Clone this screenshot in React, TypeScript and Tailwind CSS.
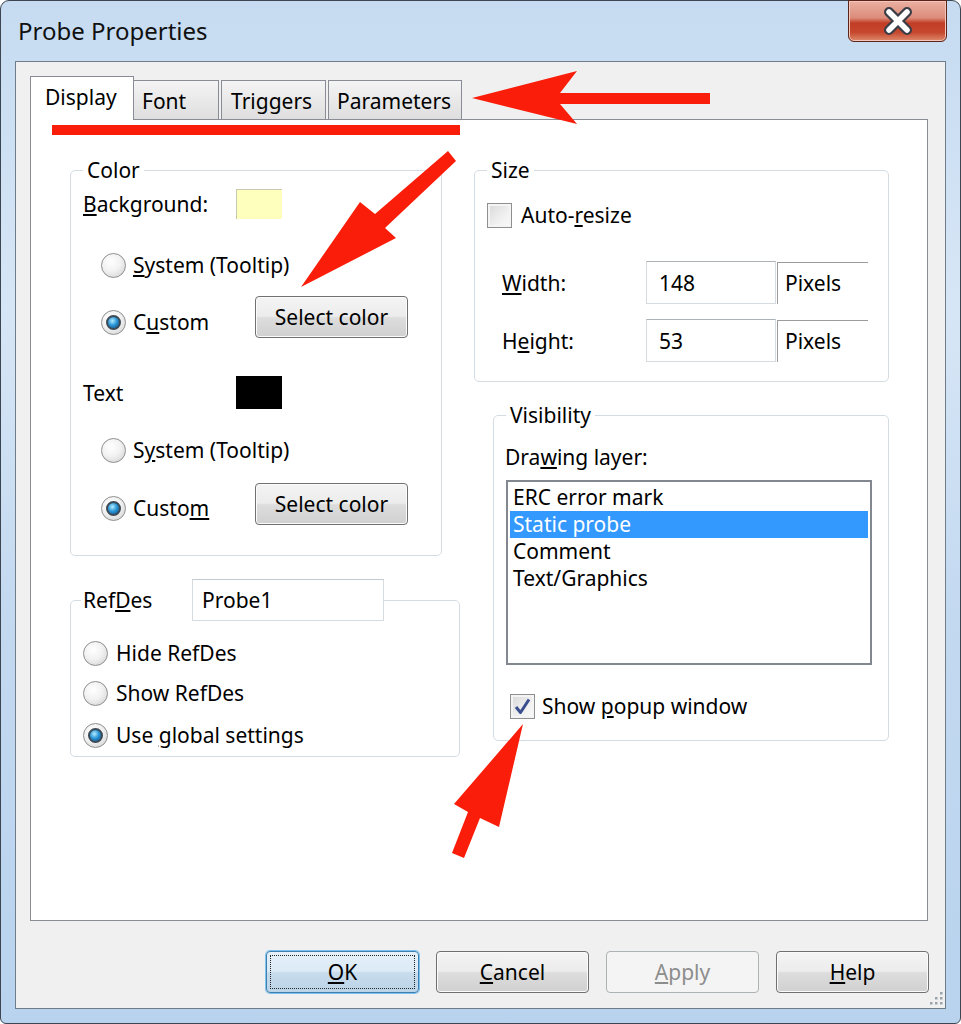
import React from 'react';

function Radio({ checked }: { checked?: boolean }) {
  return (
    <span className="w-[25px] h-[25px] rounded-full border border-[#8e8f8f] bg-[radial-gradient(circle_at_40%_35%,#ffffff_0%,#f2f2f2_45%,#cdcdcd_100%)] flex items-center justify-center shrink-0">
      {checked && (
        <span className="w-[15px] h-[15px] rounded-full border-2 border-[#3d4a55] bg-[radial-gradient(circle_at_40%_35%,#b5ecff_0%,#2d98d8_45%,#0b4a80_100%)]" />
      )}
    </span>
  );
}

function Check({ checked }: { checked?: boolean }) {
  return (
    <span className="w-[25px] h-[25px] border border-[#8e8f8f] bg-[linear-gradient(135deg,#d8d8d8_0%,#f0f0f0_60%,#fbfbfb_100%)] shadow-[inset_0_0_0_2px_#f4f4f4] flex items-center justify-center shrink-0">
      {checked && (
        <svg width="19" height="19" viewBox="0 0 19 19">
          <path d="M3 10 L7.5 15.5 L16 2.5" fill="none" stroke="#3b4f8f" strokeWidth="3" strokeLinejoin="round" />
        </svg>
      )}
    </span>
  );
}

function Btn({ children }: { children: React.ReactNode }) {
  return (
    <div className="w-[153px] h-[42px] rounded-[4px] border border-[#707070] bg-[linear-gradient(to_bottom,#f4f4f4_0%,#ececec_48%,#dddddd_52%,#d0d0d0_100%)] shadow-[inset_0_0_0_1px_#fbfbfb] flex items-center justify-center">
      {children}
    </div>
  );
}

function TextBox({ children }: { children: React.ReactNode }) {
  return (
    <div className="w-[130px] h-[43px] border border-[#d6dbe0] border-t-[#adb2b8] bg-white flex items-center pl-[12px]">
      {children}
    </div>
  );
}

const legend = 'ml-[12px] px-[4px] leading-[28px]';
const group = 'border border-[#d3dce3] rounded-[5px]';

export default function App() {
  return (
    <div className="relative w-[961px] h-[1024px] overflow-hidden bg-white font-['Noto_Sans',sans-serif] text-[21px] leading-[28px] text-black">
      <div className="h-full flex flex-col rounded-t-[9px] rounded-b-[6px] border border-[#3b4652] bg-[linear-gradient(to_bottom,#c6dbf1_0%,#d7e6f6_30%,#c3d9f0_60%,#b9d3ee_100%)]">
        {/* title bar */}
        <div className="h-[60px] flex items-start justify-between pl-[17px]">
          <div className="mt-[14px] text-[24px] leading-[32px] text-[#111]">Probe Properties</div>
          <div className="-mt-px mr-[13px] w-[99px] h-[42px] rounded-b-[6px] border border-[#5c2418] bg-[linear-gradient(to_bottom,#eab0a2_0%,#dc8c7a_42%,#c23d25_55%,#c5472d_78%,#de8a6c_100%)] shadow-[inset_0_0_0_1px_#f3c7bb] flex items-center justify-center">
            <svg width="36" height="28" viewBox="0 0 36 28">
              <path d="M9 5 L27 23 M27 5 L9 23" stroke="#3a3d46" strokeWidth="10" strokeLinecap="round" />
              <path d="M9 5 L27 23 M27 5 L9 23" stroke="#ffffff" strokeWidth="5.5" strokeLinecap="round" />
            </svg>
          </div>
        </div>

        {/* client area */}
        <div className="relative flex-1 mx-[14px] mb-[14px] border border-[#6f7c89] bg-[#f0f0f0] flex flex-col pt-[14px] pl-[14px] pr-[17px]">
          {/* tabs */}
          <div className="flex items-end h-[43px]">
            <div className="relative z-10 -mb-px w-[104px] h-[44px] border border-b-0 border-[#898c95] bg-white pl-[14px] pt-[6px]">Display</div>
            <div className="w-[85px] h-[39px] border border-l-0 border-b-0 border-[#898c95] bg-[linear-gradient(to_bottom,#f4f4f4,#dedede)] pl-[8px] pt-[6px]">Font</div>
            <div className="ml-[2px] w-[105px] h-[39px] border border-b-0 border-[#898c95] bg-[linear-gradient(to_bottom,#f4f4f4,#dedede)] pl-[9px] pt-[6px]">Triggers</div>
            <div className="ml-[2px] w-[134px] h-[39px] border border-b-0 border-[#898c95] bg-[linear-gradient(to_bottom,#f4f4f4,#dedede)] pl-[8px] pt-[6px]">Parameters</div>
          </div>

          {/* panel */}
          <div className="h-[802px] border border-[#898c95] bg-white flex items-start pt-[36px] pl-[39px]">
            {/* left column */}
            <div className="w-[390px] flex flex-col items-start">
              <fieldset className={`${group} w-[372px] h-[400px]`}>
                <legend className={legend}>Color</legend>
                <div className="mt-[5px] pl-[12px] h-[30px] flex items-center">
                  <span className="w-[153px]"><u>B</u>ackground:</span>
                  <span className="w-[46px] h-[30px] bg-[#ffffbd] border-l border-t border-[#c9c9b0]" />
                </div>
                <div className="mt-[32px] pl-[30px] h-[28px] flex items-center gap-[7px]">
                  <Radio />
                  <span><u>S</u>ystem (Tooltip)</span>
                </div>
                <div className="mt-[17px] pl-[30px] flex items-start">
                  <div className="w-[154px] mt-[12px] h-[28px] flex items-center gap-[7px]">
                    <Radio checked />
                    <span>C<u>u</u>stom</span>
                  </div>
                  <Btn>Select color</Btn>
                </div>
                <div className="mt-[38px] pl-[12px] h-[33px] flex items-center">
                  <span className="w-[153px]">Text</span>
                  <span className="w-[46px] h-[33px] bg-black" />
                </div>
                <div className="mt-[27px] pl-[30px] h-[28px] flex items-center gap-[7px]">
                  <Radio />
                  <span>S<u>y</u>stem (Tooltip)</span>
                </div>
                <div className="mt-[19px] pl-[30px] flex items-start">
                  <div className="w-[154px] mt-[11px] h-[28px] flex items-center gap-[7px]">
                    <Radio checked />
                    <span>Custo<u>m</u></span>
                  </div>
                  <Btn>Select color</Btn>
                </div>
              </fieldset>

              <fieldset className={`${group} mt-[23px] w-[390px] h-[178px]`}>
                <legend className="ml-[10px] pl-[2px] flex items-center h-[42px]">
                  <span className="w-[109px]">Ref<u>D</u>es</span>
                  <div className="w-[192px] h-[42px] border border-[#d6dbe0] border-t-[#c4c9cf] bg-white flex items-center pl-[9px]">Probe1</div>
                </legend>
                <div className="mt-[18px] pl-[12px] h-[28px] flex items-center gap-[8px]">
                  <Radio />
                  <span>Hide RefDes</span>
                </div>
                <div className="mt-[12px] pl-[12px] h-[28px] flex items-center gap-[8px]">
                  <Radio />
                  <span>Show RefDes</span>
                </div>
                <div className="mt-[14px] pl-[12px] h-[28px] flex items-center gap-[8px]">
                  <Radio checked />
                  <span>Use <u>g</u>lobal settings</span>
                </div>
              </fieldset>
            </div>

            {/* right column */}
            <div className="ml-[14px] flex flex-col items-start">
              <fieldset className={`${group} w-[415px] h-[226px]`}>
                <legend className={legend}>Size</legend>
                <div className="mt-[17px] pl-[12px] h-[28px] flex items-center gap-[9px]">
                  <Check />
                  <span>Auto-<u>r</u>esize</span>
                </div>
                <div className="mt-[32px] pl-[27px] flex items-center">
                  <span className="w-[144px]"><u>W</u>idth:</span>
                  <TextBox>148</TextBox>
                  <div className="ml-px w-[91px] h-[42px] border-l border-t border-[#9c9c9c] flex items-center pl-[7px]">Pixels</div>
                </div>
                <div className="mt-[15px] pl-[27px] flex items-center">
                  <span className="w-[144px]">H<u>e</u>ight:</span>
                  <TextBox>53</TextBox>
                  <div className="ml-px w-[91px] h-[42px] border-l border-t border-[#9c9c9c] flex items-center pl-[7px]">Pixels</div>
                </div>
              </fieldset>

              <fieldset className={`${group} mt-[19px] ml-[19px] w-[396px] h-[340px]`}>
                <legend className={legend}>Visibility</legend>
                <div className="mt-[14px] pl-[11px]">Dra<u>w</u>ing layer:</div>
                <div className="mt-[9px] ml-[12px] w-[366px] h-[185px] border-2 border-[#828790] bg-white pt-[2px] px-[2px]">
                  <div className="h-[27px] pl-[3px] leading-[27px]">ERC error mark</div>
                  <div className="h-[27px] pl-[3px] leading-[27px] bg-[#3399ff] text-white">Static probe</div>
                  <div className="h-[27px] pl-[3px] leading-[27px]">Comment</div>
                  <div className="h-[27px] pl-[3px] leading-[27px]">Text/Graphics</div>
                </div>
                <div className="mt-[27px] pl-[16px] h-[28px] flex items-center gap-[7px]">
                  <Check checked />
                  <span>Show <u>p</u>opup window</span>
                </div>
              </fieldset>
            </div>
          </div>

          {/* bottom buttons */}
          <div className="mt-[30px] -mr-px flex justify-end gap-[17px]">
            <div className="w-[153px] h-[42px] rounded-[4px] border border-[#3c7fb1] bg-[linear-gradient(to_bottom,#e6f1f9_0%,#dbeaf5_48%,#c7dcec_52%,#bcd4e8_100%)] shadow-[0_0_0_1px_#7dc3ee] p-[3px]">
              <div className="h-full border border-dotted border-[#222] flex items-center justify-center">
                <span><u>O</u>K</span>
              </div>
            </div>
            <Btn><u>C</u>ancel</Btn>
            <div className="w-[153px] h-[42px] rounded-[4px] border border-[#adb2b5] bg-[#f4f4f4] flex items-center justify-center text-[#8d8d8d]">
              <span><u>A</u>pply</span>
            </div>
            <Btn><u>H</u>elp</Btn>
          </div>

          {/* size grip */}
          <svg className="absolute right-[1px] bottom-[2px]" width="16" height="16" viewBox="0 0 16 16">
            {[
              [13, 3], [13, 8], [13, 13], [8, 8], [8, 13], [3, 13],
            ].map(([x, y], i) => (
              <rect key={i} x={x - 1} y={y - 1} width="2.5" height="2.5" fill="#9aa3ab" />
            ))}
          </svg>
        </div>
      </div>

      {/* red annotation marks */}
      <svg className="absolute inset-0 pointer-events-none" width="961" height="1024" viewBox="0 0 961 1024">
        <rect x="52" y="125" width="408" height="10" fill="#fa1e0a" />
        <polygon points="472,98 577,71 560,93 710,93 710,104 560,104 577,124" fill="#fa1e0a" />
        <polygon points="301,287 360,202 375,214 448,151 456,161 385,228 396,238" fill="#fa1e0a" />
        <polygon points="523,724 499,827 480,818 464,858 452,853 468,812 454,804" fill="#fa1e0a" />
      </svg>
    </div>
  );
}
